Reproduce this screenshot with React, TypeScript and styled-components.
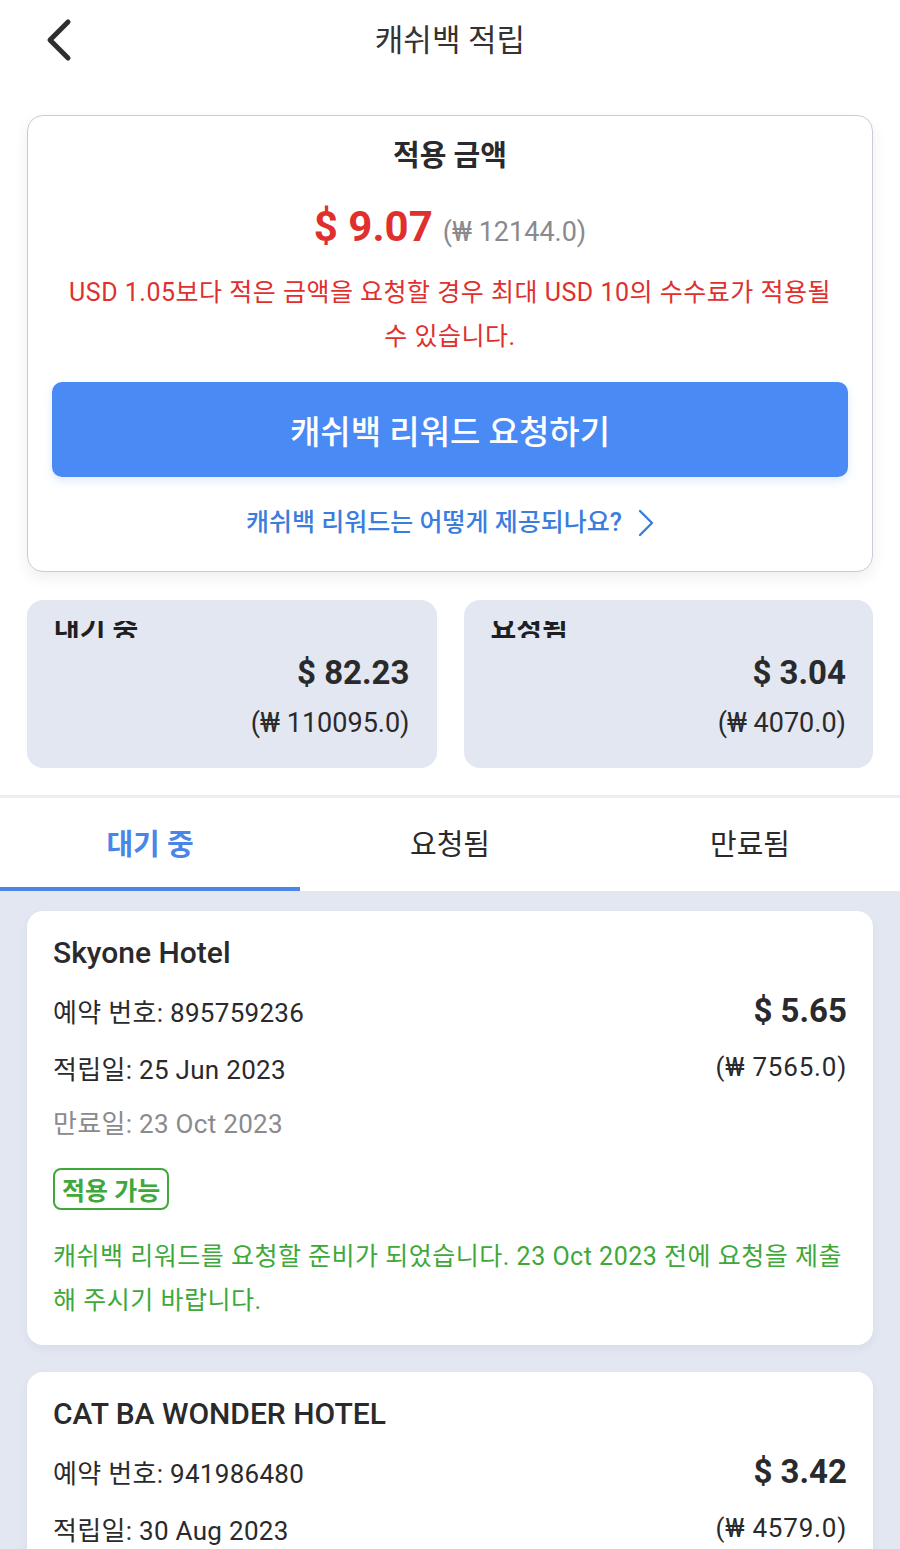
import React from "react";
import styled, { createGlobalStyle } from "styled-components";

const Global = createGlobalStyle`
  html, body { margin: 0; padding: 0; background: #ffffff; }
  body { font-family: "Roboto", "Noto Sans CJK KR", sans-serif; color: #2a2a2c; }
  * { box-sizing: border-box; }
`;

const Page = styled.div`
  width: 900px;
  display: flex;
  flex-direction: column;
`;

const Header = styled.header`
  height: 80px;
  display: flex;
  align-items: center;
  justify-content: center;
  position: relative;
`;

const BackButton = styled.button`
  position: absolute;
  left: 38px;
  top: 16px;
  width: 40px;
  height: 48px;
  border: 0;
  background: transparent;
  padding: 0;
  display: flex;
  align-items: center;
  justify-content: center;
`;

const Title = styled.h1`
  margin: 0;
  font-size: 31px;
  font-weight: 400;
  color: #333;
  line-height: 1;
`;

const Top = styled.section`
  padding: 35px 27px 27px;
  display: flex;
  flex-direction: column;
  gap: 28px;
`;

const MainCard = styled.div`
  background: #fff;
  border: 1px solid #c9ccd6;
  border-radius: 16px;
  box-shadow: 0 6px 14px rgba(40, 50, 80, 0.08);
  padding: 21px 24px 31px;
  display: flex;
  flex-direction: column;
  align-items: center;
`;

const CardTitle = styled.div`
  font-size: 29px;
  font-weight: 700;
  line-height: 38px;
  color: #2a2a2c;
`;

const AmountRow = styled.div`
  margin-top: 26px;
  display: flex;
  align-items: baseline;
  gap: 10px;
  line-height: 52px;
`;

const BigAmount = styled.span`
  font-size: 42px;
  font-weight: 700;
  color: #e0302e;
`;

const SubAmount = styled.span`
  font-size: 27px;
  color: #8a8a8e;
`;

const Warning = styled.p`
  margin: 13px 0 0;
  font-size: 25px;
  letter-spacing: 0.5px;
  line-height: 44px;
  color: #e0302e;
  text-align: center;
`;

const PrimaryButton = styled.button`
  margin-top: 23px;
  width: 100%;
  height: 95px;
  border: 0;
  border-radius: 10px;
  background: #4a8af4;
  color: #fff;
  font-family: inherit;
  font-size: 33px;
  font-weight: 500;
  box-shadow: 0 4px 10px rgba(74, 138, 244, 0.18);
`;

const HelpLink = styled.a`
  margin-top: 29px;
  display: flex;
  align-items: center;
  gap: 16px;
  font-size: 25px;
  font-weight: 500;
  line-height: 34px;
  color: #3b7ddd;
  text-decoration: none;
`;

const StatGrid = styled.div`
  display: grid;
  grid-template-columns: 1fr 1fr;
  gap: 27px;
`;

const StatBox = styled.div`
  background: #e2e7f2;
  border-radius: 16px;
  padding: 21px 27px 27px;
  display: flex;
  flex-direction: column;
  align-items: flex-end;
`;

const StatLabelClip = styled.div`
  align-self: stretch;
  height: 17px;
  overflow: hidden;
`;

const StatLabel = styled.div`
  margin-top: -8px;
  font-size: 28px;
  font-weight: 700;
  line-height: 34px;
  color: #1f1f21;
`;

const StatAmount = styled.div`
  margin-top: 13px;
  font-size: 33px;
  font-weight: 700;
  line-height: 44px;
  color: #2a2a2c;
`;

const StatKrw = styled.div`
  margin-top: 10px;
  font-size: 27px;
  line-height: 36px;
  color: #2a2a2c;
`;

const Tabs = styled.nav`
  display: grid;
  grid-template-columns: repeat(3, 1fr);
  border-top: 3px solid #eceef3;
  border-bottom: 3px solid #e4e6ec;
  background: #fff;
`;

const Tab = styled.div<{ $active?: boolean }>`
  height: 93px;
  display: flex;
  align-items: center;
  justify-content: center;
  padding-bottom: 2px;
  font-size: 29px;
  font-weight: ${(p) => (p.$active ? 700 : 400)};
  color: ${(p) => (p.$active ? "#4a86e8" : "#2a2a2c")};
  border-bottom: 4px solid ${(p) => (p.$active ? "#4a86e8" : "transparent")};
`;

const List = styled.section`
  background: #e2e7f2;
  padding: 17px 27px 40px;
  display: flex;
  flex-direction: column;
  gap: 27px;
`;

const ItemCard = styled.article`
  background: #fff;
  border-radius: 16px;
  padding: 22px 26px 22px;
  display: flex;
  flex-direction: column;
  box-shadow: 0 4px 10px rgba(40, 50, 80, 0.05);
`;

const HotelName = styled.h2`
  margin: 0;
  font-size: 30px;
  font-weight: 500;
  line-height: 40px;
  color: #2a2a2c;
`;

const InfoRow = styled.div<{ $gap: number }>`
  margin-top: ${(p) => p.$gap}px;
  display: flex;
  justify-content: space-between;
  align-items: center;
  height: 44px;
`;

const InfoText = styled.span<{ $muted?: boolean }>`
  font-size: 26px;
  letter-spacing: 0.3px;
  color: ${(p) => (p.$muted ? "#8a8a8e" : "#2a2a2c")};
`;

const ItemKrw = styled.span`
  font-size: 26px;
  letter-spacing: 0.8px;
  color: #2a2a2c;
`;

const ItemAmount = styled.span`
  font-size: 33px;
  font-weight: 700;
  color: #2a2a2c;
`;

const Badge = styled.span`
  margin-top: 25px;
  align-self: flex-start;
  height: 42px;
  padding: 0 7px;
  display: flex;
  align-items: center;
  border: 2px solid #3ea83a;
  border-radius: 8px;
  font-size: 25px;
  font-weight: 700;
  color: #3ea83a;
`;

const Note = styled.p`
  margin: 25px 0 0;
  font-size: 25px;
  letter-spacing: 0.5px;
  line-height: 44px;
  color: #3ea83a;
`;

const BackIcon = () => (
  <svg width="32" height="44" viewBox="0 0 32 44" fill="none">
    <polyline
      points="26,4 8,22 26,40"
      stroke="#2f2f31"
      strokeWidth="5"
      strokeLinecap="round"
      strokeLinejoin="round"
    />
  </svg>
);

const ChevronRight = () => (
  <svg width="16" height="28" viewBox="0 0 16 28" fill="none">
    <polyline
      points="2,2 14,14 2,26"
      stroke="#3b7ddd"
      strokeWidth="2.4"
      strokeLinecap="round"
      strokeLinejoin="round"
    />
  </svg>
);

type Item = {
  name: string;
  booking: string;
  earned: string;
  expires: string;
  usd: string;
  krw: string;
};

const items: Item[] = [
  {
    name: "Skyone Hotel",
    booking: "895759236",
    earned: "25 Jun 2023",
    expires: "23 Oct 2023",
    usd: "$ 5.65",
    krw: "(₩ 7565.0)",
  },
  {
    name: "CAT BA WONDER HOTEL",
    booking: "941986480",
    earned: "30 Aug 2023",
    expires: "28 Dec 2023",
    usd: "$ 3.42",
    krw: "(₩ 4579.0)",
  },
];

export default function App() {
  return (
    <Page>
      <Global />
      <Header>
        <BackButton aria-label="뒤로">
          <BackIcon />
        </BackButton>
        <Title>캐쉬백 적립</Title>
      </Header>

      <Top>
        <MainCard>
          <CardTitle>적용 금액</CardTitle>
          <AmountRow>
            <BigAmount>$ 9.07</BigAmount>
            <SubAmount>(₩ 12144.0)</SubAmount>
          </AmountRow>
          <Warning>
            USD 1.05보다 적은 금액을 요청할 경우 최대 USD 10의 수수료가 적용될
            <br />수 있습니다.
          </Warning>
          <PrimaryButton>캐쉬백 리워드 요청하기</PrimaryButton>
          <HelpLink href="#">
            캐쉬백 리워드는 어떻게 제공되나요?
            <ChevronRight />
          </HelpLink>
        </MainCard>

        <StatGrid>
          <StatBox>
            <StatLabelClip>
              <StatLabel>대기 중</StatLabel>
            </StatLabelClip>
            <StatAmount>$ 82.23</StatAmount>
            <StatKrw>(₩ 110095.0)</StatKrw>
          </StatBox>
          <StatBox>
            <StatLabelClip>
              <StatLabel>요청됨</StatLabel>
            </StatLabelClip>
            <StatAmount>$ 3.04</StatAmount>
            <StatKrw>(₩ 4070.0)</StatKrw>
          </StatBox>
        </StatGrid>
      </Top>

      <Tabs>
        <Tab $active>대기 중</Tab>
        <Tab>요청됨</Tab>
        <Tab>만료됨</Tab>
      </Tabs>

      <List>
        {items.map((it) => (
          <ItemCard key={it.booking}>
            <HotelName>{it.name}</HotelName>
            <InfoRow $gap={15}>
              <InfoText>예약 번호: {it.booking}</InfoText>
              <ItemAmount>{it.usd}</ItemAmount>
            </InfoRow>
            <InfoRow $gap={13}>
              <InfoText>적립일: {it.earned}</InfoText>
              <ItemKrw>{it.krw}</ItemKrw>
            </InfoRow>
            <InfoRow $gap={10}>
              <InfoText $muted>만료일: {it.expires}</InfoText>
            </InfoRow>
            <Badge>적용 가능</Badge>
            <Note>
              캐쉬백 리워드를 요청할 준비가 되었습니다. {it.expires} 전에 요청을 제출
              <br />해 주시기 바랍니다.
            </Note>
          </ItemCard>
        ))}
      </List>
    </Page>
  );
}
